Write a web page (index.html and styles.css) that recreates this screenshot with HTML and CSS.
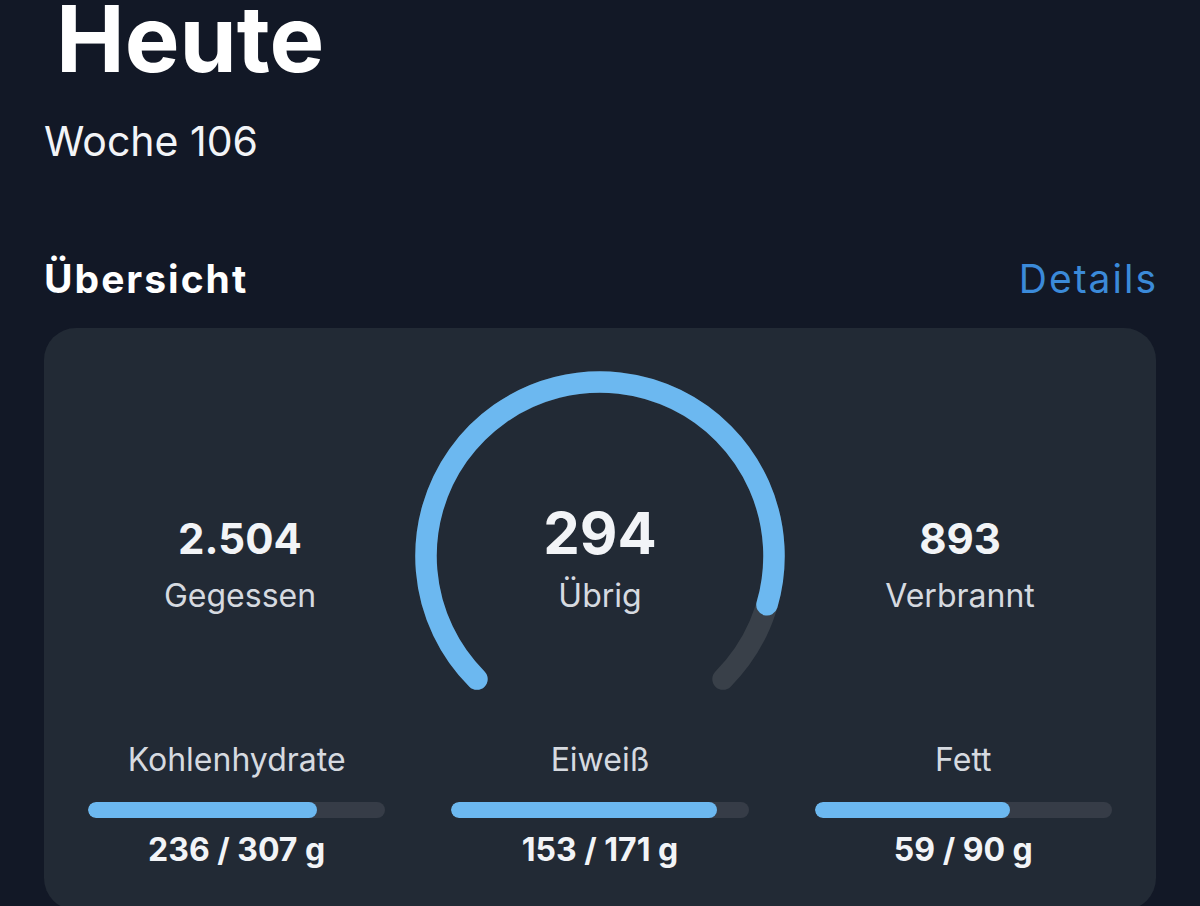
FILE: index.html
```html
<!DOCTYPE html>
<html lang="de">
<head>
<meta charset="utf-8">
<title>Heute</title>
<link rel="stylesheet" href="styles.css">
</head>
<body>
<main class="page">
  <h1 class="title">Heute</h1>
  <p class="week">Woche 106</p>

  <div class="section-head">
    <h2 class="section-title">Übersicht</h2>
    <a class="section-link" href="#">Details</a>
  </div>

  <section class="card">
    <div class="stats">
      <div class="stat">
        <div class="stat-value">2.504</div>
        <div class="stat-label">Gegessen</div>
      </div>
      <div class="stat stat-main">
        <svg class="gauge" width="380" height="380" viewBox="0 0 380 380" aria-hidden="true">
          <path class="gauge-track" d="M66.96 313.04 A174 174 0 1 1 313.04 313.04"/>
          <path class="gauge-fill" d="M66.96 313.04 A174 174 0 1 1 357.0 238.84"/>
        </svg>
        <div class="stat-value stat-value-main">294</div>
        <div class="stat-label">Übrig</div>
      </div>
      <div class="stat">
        <div class="stat-value">893</div>
        <div class="stat-label">Verbrannt</div>
      </div>
    </div>

    <div class="macros">
      <div class="macro">
        <div class="macro-label">Kohlenhydrate</div>
        <div class="bar"><div class="bar-fill" style="width:76.9%"></div></div>
        <div class="macro-value">236 / 307 g</div>
      </div>
      <div class="macro">
        <div class="macro-label">Eiweiß</div>
        <div class="bar"><div class="bar-fill" style="width:89.5%"></div></div>
        <div class="macro-value">153 / 171 g</div>
      </div>
      <div class="macro">
        <div class="macro-label">Fett</div>
        <div class="bar"><div class="bar-fill" style="width:65.6%"></div></div>
        <div class="macro-value">59 / 90 g</div>
      </div>
    </div>
  </section>
</main>
</body>
</html>
```

FILE: styles.css
```css
* { box-sizing: border-box; }

html, body {
  margin: 0;
  padding: 0;
  background: #121826;
  height: 100%;
  overflow: hidden;
}

body {
  font-family: "Inter", "Noto Sans", sans-serif;
  color: #ffffff;
}

.page {
  padding: 0 44px;
}

.title {
  margin: -7px 0 0 0;
  padding-left: 12px;
  font-size: 92px;
  line-height: 92px;
  font-weight: 700;
  letter-spacing: 0;
  color: #ffffff;
}

.week {
  margin: 31px 0 0 0;
  font-size: 41px;
  line-height: 50px;
  font-weight: 400;
  color: #f2f4f7;
}

.section-head {
  margin-top: 90px;
  display: flex;
  justify-content: space-between;
  align-items: baseline;
}

.section-title {
  margin: 0;
  font-size: 39px;
  line-height: 46px;
  font-weight: 700;
  letter-spacing: 2px;
  color: #ffffff;
}

.section-link {
  font-size: 39px;
  line-height: 46px;
  letter-spacing: 2px;
  margin-right: -2px;
  color: #3b8ad9;
  text-decoration: none;
}

.card {
  margin-top: 26px;
  background: #222a35;
  border-radius: 32px;
  padding: 174px 0 40px 0;
}

.stats {
  display: grid;
  grid-template-columns: repeat(3, 1fr);
  align-items: end;
  padding: 0 16px;
}

.stat {
  display: flex;
  flex-direction: column;
  align-items: center;
  text-align: center;
}

.stat-main {
  position: relative;
}

.gauge {
  position: absolute;
  left: 50%;
  top: -136px;
  margin-left: -190px;
  overflow: visible;
  z-index: 0;
}

.gauge-track,
.gauge-fill {
  fill: none;
  stroke-width: 21.5;
  stroke-linecap: round;
}

.gauge-track { stroke: #394049; }
.gauge-fill { stroke: #6cb8f0; }

.stat-value {
  position: relative;
  font-size: 42px;
  line-height: 50px;
  font-weight: 700;
  color: #f2f4f7;
}

.stat-value-main {
  font-size: 58px;
  line-height: 62px;
}

.stat-label {
  position: relative;
  margin-top: 12px;
  font-size: 32px;
  line-height: 40px;
  color: #d6dae0;
}

.macros {
  margin-top: 124px;
  display: grid;
  grid-template-columns: repeat(3, 1fr);
  column-gap: 66px;
  padding: 0 44px;
}

.macro {
  display: flex;
  flex-direction: column;
  align-items: center;
}

.macro-label {
  font-size: 32px;
  line-height: 40px;
  color: #d6dae0;
}

.bar {
  margin-top: 22px;
  width: 100%;
  height: 16px;
  border-radius: 8px;
  background: #363c47;
  overflow: hidden;
}

.bar-fill {
  height: 100%;
  border-radius: 8px;
  background: #6cb8f0;
}

.macro-value {
  margin-top: 12px;
  font-size: 32px;
  line-height: 40px;
  font-weight: 700;
  color: #f2f4f7;
}
```
